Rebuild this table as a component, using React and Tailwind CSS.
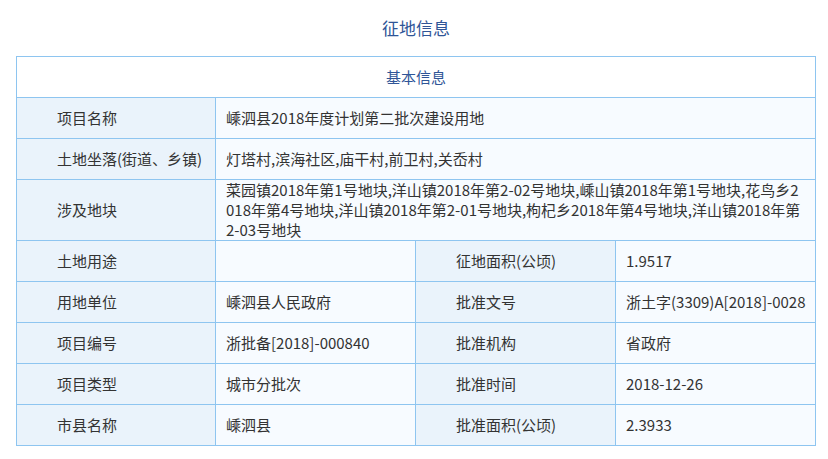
import React from "react";

const font = { fontFamily: '"Noto Sans CJK SC", "Noto Sans", sans-serif' };

function Label({ children, last }) {
  return (
    <div className={`flex items-center pl-[40px] bg-[#eaf3fb] ${last ? "" : "border-r border-[#8ec5f0]"}`}>
      {children}
    </div>
  );
}
function Value({ children, last }) {
  return (
    <div className={`flex items-center pl-[10px] bg-[#f7fbff] whitespace-nowrap ${last ? "" : "border-r border-[#8ec5f0]"}`}>
      {children}
    </div>
  );
}

function Row2({ label, value, h = "h-[41px]" }) {
  return (
    <div className={`grid grid-cols-[199px_1fr] ${h} border-t border-[#8ec5f0]`}>
      <Label>{label}</Label>
      <Value last>{value}</Value>
    </div>
  );
}

function Row4({ a, b, c, d }) {
  return (
    <div className="grid grid-cols-[199px_200px_200px_1fr] h-[41px] border-t border-[#8ec5f0]">
      <Label>{a}</Label>
      <Value>{b}</Value>
      <Label>{c}</Label>
      <Value last>{d}</Value>
    </div>
  );
}

export default function App() {
  return (
    <div className="w-[828px] h-[459px] bg-white text-[15px] text-[#333333]" style={font}>
      <div className="ml-[16px] w-[800px]">
        <div className="h-[56px] flex items-center justify-center text-[17px] text-[#2f5597]">征地信息</div>
        <div className="border-x border-b border-t border-[#8ec5f0]">
          <div className="h-[40px] flex items-center justify-center bg-white text-[#2f5597]">基本信息</div>
          <Row2 label="项目名称" value="嵊泗县2018年度计划第二批次建设用地" />
          <Row2 label="土地坐落(街道、乡镇)" value="灯塔村,滨海社区,庙干村,前卫村,关岙村" />
          <div className="grid grid-cols-[199px_1fr] h-[61px] border-t border-[#8ec5f0]">
            <Label>涉及地块</Label>
            <div className="flex flex-col justify-center pl-[10px] bg-[#f7fbff] leading-[20px] whitespace-nowrap">
              <span>菜园镇2018年第1号地块,洋山镇2018年第2-02号地块,嵊山镇2018年第1号地块,花鸟乡2</span>
              <span>018年第4号地块,洋山镇2018年第2-01号地块,枸杞乡2018年第4号地块,洋山镇2018年第</span>
              <span>2-03号地块</span>
            </div>
          </div>
          <Row4 a="土地用途" b="" c="征地面积(公顷)" d="1.9517" />
          <Row4 a="用地单位" b="嵊泗县人民政府" c="批准文号" d="浙土字(3309)A[2018]-0028" />
          <Row4 a="项目编号" b="浙批备[2018]-000840" c="批准机构" d="省政府" />
          <Row4 a="项目类型" b="城市分批次" c="批准时间" d="2018-12-26" />
          <Row4 a="市县名称" b="嵊泗县" c="批准面积(公顷)" d="2.3933" />
        </div>
      </div>
    </div>
  );
}
